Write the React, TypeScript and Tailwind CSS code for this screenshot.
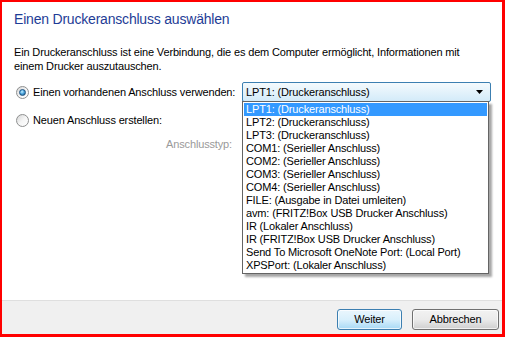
import React from "react";

const items = [
  "LPT1: (Druckeranschluss)",
  "LPT2: (Druckeranschluss)",
  "LPT3: (Druckeranschluss)",
  "COM1: (Serieller Anschluss)",
  "COM2: (Serieller Anschluss)",
  "COM3: (Serieller Anschluss)",
  "COM4: (Serieller Anschluss)",
  "FILE: (Ausgabe in Datei umleiten)",
  "avm: (FRITZ!Box USB Drucker Anschluss)",
  "IR (Lokaler Anschluss)",
  "IR (FRITZ!Box USB Drucker Anschluss)",
  "Send To Microsoft OneNote Port: (Local Port)",
  "XPSPort: (Lokaler Anschluss)",
];

function Radio({ checked }: { checked?: boolean }) {
  return (
    <span className="relative flex h-[13px] w-[13px] items-center justify-center rounded-full border border-[#8e8f8f] bg-gradient-to-br from-[#d5d5d5] via-[#f5f5f5] to-[#ffffff]">
      {checked && (
        <span className="h-[7px] w-[7px] rounded-full border border-[#1c5180] bg-[radial-gradient(circle_at_40%_35%,#c5f0ff_0%,#4fa7e0_45%,#15537e_100%)]" />
      )}
    </span>
  );
}

export default function App() {
  return (
    <div
      className="box-border flex h-[337px] w-[505px] flex-col border-t-2 border-l-2 border-r-[3px] border-b-[3px] border-[#ff0000] bg-white text-[11px] leading-[14px] tracking-[-0.15px] text-black"
      style={{ fontFamily: '"Liberation Sans", Arial, sans-serif' }}
    >
      <div className="flex h-[298px] flex-col bg-white pl-[12px]">
        <div className="mt-[7px] text-[14px] leading-[20px] tracking-[-0.2px] text-[#1e3c96]">
          Einen Druckeranschluss auswählen
        </div>
        <div className="mt-[16px]">
          <div>Ein Druckeranschluss ist eine Verbindung, die es dem Computer ermöglicht, Informationen mit</div>
          <div>einem Drucker auszutauschen.</div>
        </div>
        <div className="mt-[9px] flex h-[20px] items-center">
          <div className="flex w-[228px] items-center pl-[2px]">
            <Radio checked />
            <span className="ml-[4px]">Einen vorhandenen Anschluss verwenden:</span>
          </div>
          <div className="relative">
            <div className="flex h-[20px] w-[249px] items-center justify-between rounded-[2px] border border-[#3c7fb1] bg-gradient-to-b from-[#f4fafd] to-[#d3ebf9] pl-[3px] pr-[6px]">
              <span>LPT1: (Druckeranschluss)</span>
              <svg width="8" height="5" viewBox="0 0 8 5">
                <path d="M0 0 H7 L3.5 4 Z" fill="#000" />
              </svg>
            </div>
            <div className="absolute left-0 top-[19px] z-10 w-[247px] border border-[#646464] bg-white p-px shadow-[3px_3px_2px_rgba(0,0,0,0.35)]">
              {items.map((t, i) => (
                <div
                  key={i}
                  className={
                    "h-[13px] pl-[2px] leading-[13px] whitespace-nowrap " +
                    (i === 0 ? "bg-[#3399ff] text-white" : "")
                  }
                >
                  {t}
                </div>
              ))}
            </div>
          </div>
        </div>
        <div className="mt-[11px] flex items-center pl-[2px]">
          <Radio />
          <span className="ml-[4px]">Neuen Anschluss erstellen:</span>
        </div>
        <div className="mt-[10px] flex w-[218px] justify-end text-[#9a9a9a]">
          Anschlusstyp:
        </div>
      </div>
      <div className="flex flex-1 items-start justify-end gap-[10px] border-t border-[#dfdfdf] bg-[#f0f0f0] pr-[3px] pt-[8px]">
        <button className="h-[21px] w-[65px] rounded-[3px] border border-[#3c7fb1] bg-gradient-to-b from-[#eaf6fd] via-[#d9f0fc] to-[#a7d9f5] text-[11px] leading-[19px] text-black shadow-[inset_0_0_0_1px_rgba(255,255,255,0.7)]">
          Weiter
        </button>
        <button className="h-[21px] w-[87px] rounded-[3px] border border-[#707070] bg-gradient-to-b from-[#f2f2f2] via-[#ebebeb] to-[#cfcfcf] text-[11px] leading-[19px] text-black shadow-[inset_0_0_0_1px_rgba(255,255,255,0.7)]">
          Abbrechen
        </button>
      </div>
    </div>
  );
}
